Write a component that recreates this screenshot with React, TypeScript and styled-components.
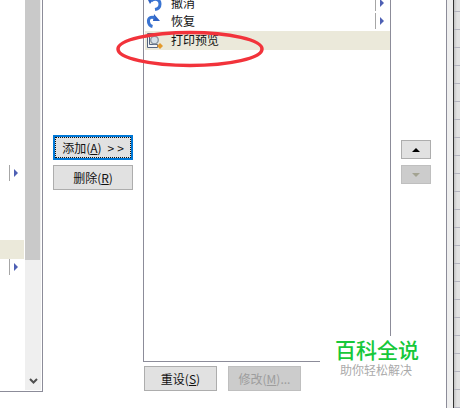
import React from 'react';
import styled, { createGlobalStyle } from 'styled-components';

const GlobalStyle = createGlobalStyle`
  html, body {
    margin: 0;
    padding: 0;
    background: #fff;
  }
  body {
    font-family: "Noto Sans CJK SC", "Liberation Sans", sans-serif;
    font-size: 12px;
    color: #111;
  }
`;

const Page = styled.div`
  position: relative;
  display: flex;
  width: 460px;
  height: 408px;
  overflow: hidden;
  background: #fff;
`;

const Dialog = styled.div`
  display: flex;
  flex: none;
  width: 446px;
  height: 408px;
`;

const LeftPane = styled.div`
  display: flex;
  flex: none;
  width: 43px;
  height: 392px;
  box-sizing: border-box;
  border-right: 1px solid #8c8c99;
  border-bottom: 1px solid #8c8c99;
`;

const LeftRows = styled.div`
  display: flex;
  flex-direction: column;
  flex: none;
  width: 25px;
  padding-top: 165px;
  box-sizing: border-box;
`;

const RowGap = styled.div<{ $h: number }>`
  flex: none;
  height: ${p => p.$h}px;
`;

const LeftHighlight = styled.div`
  flex: none;
  width: 24px;
  height: 19px;
  background: #ebe9da;
`;

const SubmenuMark = styled.div<{ $h: number }>`
  flex: none;
  display: flex;
  align-items: center;
  gap: 4px;
  height: ${p => p.$h}px;
  box-sizing: border-box;
  padding-left: 9px;

  &::before {
    content: '';
    width: 1px;
    height: 100%;
    background: #a6a6a6;
  }

  &::after {
    content: '';
    border-left: 4px solid #4e60b4;
    border-top: 4px solid transparent;
    border-bottom: 4px solid transparent;
  }
`;

const Scrollbar = styled.div`
  display: flex;
  flex-direction: column;
  flex: none;
  width: 16px;
  height: 390px;
  background: #efefef;
`;

const ScrollThumb = styled.div`
  flex: none;
  width: 15px;
  height: 260px;
  background: #c9c9c9;
`;

const ScrollArrow = styled.div`
  display: flex;
  justify-content: center;
  margin-top: auto;
  padding-bottom: 5px;
`;

const AddColumn = styled.div`
  display: flex;
  flex-direction: column;
  flex: none;
  gap: 5px;
  width: 100px;
  box-sizing: border-box;
  padding: 135px 0 0 10px;
`;

const Button = styled.div<{ $w: number; $h?: number; $disabled?: boolean; $default?: boolean }>`
  display: flex;
  align-items: center;
  justify-content: center;
  flex: none;
  width: ${p => p.$w}px;
  height: ${p => p.$h ?? 25}px;
  box-sizing: border-box;
  white-space: pre;
  background: ${p => (p.$disabled ? '#cccccc' : '#e1e1e1')};
  color: ${p => (p.$disabled ? '#9d9d9d' : '#111')};
  border: ${p => (p.$default ? '2px solid #0078d7' : '1px solid #adadad')};
  ${p => p.$disabled && 'border-color: #bfbfbf;'}
  ${p => p.$default && 'outline: 1px dotted #111; outline-offset: -3px;'}
`;

const Key = styled.span`
  text-decoration: underline;
  text-underline-offset: 1px;
`;

const Chevrons = styled.span`
  margin-left: 6px;
  letter-spacing: 3px;
  margin-right: -3px;
`;

const ListColumn = styled.div`
  display: flex;
  flex-direction: column;
  flex: none;
  width: 248px;
  height: 392px;
`;

const ListBox = styled.div`
  display: flex;
  flex-direction: column;
  flex: none;
  height: 362px;
  box-sizing: border-box;
  padding-left: 1px;
  border-left: 1px solid #8c8c99;
  border-right: 1px solid #8c8c99;
  border-bottom: 1px solid #8c8c99;
  overflow: hidden;
`;

const ListItem = styled.div<{ $active?: boolean; $cut?: boolean }>`
  display: flex;
  align-items: center;
  flex: none;
  height: ${p => (p.$active ? 19 : 18)}px;
  margin-top: ${p => (p.$cut ? -5 : 0)}px;
  background: ${p => (p.$active ? '#ebe9da' : 'transparent')};
  line-height: 18px;
`;

const ItemIcon = styled.svg`
  flex: none;
  width: 18px;
  height: 18px;
  margin-left: 1px;
  margin-right: 7px;
`;

const ItemLabel = styled.span`
  flex: 1;
  padding-bottom: 2px;
`;

const ItemMark = styled(SubmenuMark)`
  padding-left: 0;
  margin-right: 6px;
  margin-bottom: 2px;
`;

const ListActions = styled.div`
  display: flex;
  gap: 11px;
  padding: 4px 0 0 1px;
`;

const MoveColumn = styled.div`
  display: flex;
  flex-direction: column;
  flex: none;
  gap: 6px;
  width: 55px;
  box-sizing: border-box;
  padding: 140px 0 0 10px;
`;

const Triangle = styled.span<{ $down?: boolean }>`
  width: 0;
  height: 0;
  border-left: 4px solid transparent;
  border-right: 4px solid transparent;
  ${p =>
    p.$down
      ? 'border-top: 4px solid #a3a392;'
      : 'border-bottom: 4px solid #000;'}
`;

const Edge = styled.div`
  display: flex;
  flex: none;
  width: 13px;
  height: 408px;
  border-left: 1px solid #8c8c99;
`;

const EdgeStrip = styled.div`
  flex: none;
  width: 6px;
  background: #efefef;
  border-right: 1px solid #333;
`;

const RowHeaders = styled.div`
  flex: 1;
  background:
    repeating-linear-gradient(
      to bottom,
      transparent 0,
      transparent 11px,
      #b4b4bf 11px,
      #b4b4bf 12px,
      transparent 12px,
      transparent 18px
    ),
    linear-gradient(to right, #c4c4c4, #e2e2e2 50%);
`;

const Watermark = styled.div`
  position: absolute;
  left: 320px;
  top: 336px;
  width: 111px;
  height: 72px;
  padding-left: 15px;
  box-sizing: border-box;
  background: #fff;
`;

const WatermarkTitle = styled.div`
  font-size: 21px;
  line-height: 26px;
  font-weight: 500;
  color: #17c83a;
  white-space: nowrap;
`;

const WatermarkSub = styled.div`
  font-size: 12px;
  line-height: 16px;
  padding-left: 5px;
  color: #aaaaaa;
  white-space: nowrap;
`;

const Annotation = styled.svg`
  position: absolute;
  left: 114px;
  top: 28px;
  width: 152px;
  height: 42px;
`;

const UndoIcon = () => (
  <ItemIcon viewBox="0 0 18 18">
    <path d="M1 3h7L4 9z" fill="#2f62c4" />
    <path d="M5 6c4-3 9-2 9 3 0 3-2 5-5 5.500" fill="none" stroke="#3a74d2" strokeWidth="3" />
  </ItemIcon>
);

const RedoIcon = () => (
  <ItemIcon viewBox="0 0 18 18">
    <path d="M8 1l6 7H7z" fill="#2f62c4" />
    <path d="M9 5C5 3 2 5 2.500 9c.3 2.500 2 4 4 4.500" fill="none" stroke="#3a74d2" strokeWidth="3" />
  </ItemIcon>
);

const PreviewIcon = () => (
  <ItemIcon viewBox="0 0 18 18">
    <path d="M1.500 1.500h7v2h-5v9h8v3h-10z" fill="#f4f6f8" stroke="#55657f" />
    <circle cx="8.500" cy="8" r="3.800" fill="#d5e0e8" stroke="#8d98a3" strokeWidth="1.400" />
    <path d="M14 11l3 3-3 3-3-3z" fill="#e39a2d" />
  </ItemIcon>
);

export default function App() {
  return (
    <Page>
      <GlobalStyle />
      <Dialog>
        <LeftPane>
          <LeftRows>
            <SubmenuMark $h={16} />
            <RowGap $h={59} />
            <LeftHighlight />
            <SubmenuMark $h={16} />
          </LeftRows>
          <Scrollbar>
            <ScrollThumb />
            <ScrollArrow>
              <svg width="9" height="7" viewBox="0 0 9 7">
                <path d="M1 1l3.500 3.500L8 1" fill="none" stroke="#505050" strokeWidth="2" />
              </svg>
            </ScrollArrow>
          </Scrollbar>
        </LeftPane>
        <AddColumn>
          <Button $w={80} $default>
            添加(<Key>A</Key>)<Chevrons>{'>>'}</Chevrons>
          </Button>
          <Button $w={80}>
            删除(<Key>R</Key>)
          </Button>
        </AddColumn>
        <ListColumn>
          <ListBox>
            <ListItem $cut>
              <UndoIcon />
              <ItemLabel>撤消</ItemLabel>
              <ItemMark $h={16} />
            </ListItem>
            <ListItem>
              <RedoIcon />
              <ItemLabel>恢复</ItemLabel>
              <ItemMark $h={16} />
            </ListItem>
            <ListItem $active>
              <PreviewIcon />
              <ItemLabel>打印预览</ItemLabel>
            </ListItem>
          </ListBox>
          <ListActions>
            <Button $w={73}>
              重设(<Key>S</Key>)
            </Button>
            <Button $w={73} $disabled>
              修改(<Key>M</Key>)...
            </Button>
          </ListActions>
        </ListColumn>
        <MoveColumn>
          <Button $w={30} $h={19}>
            <Triangle />
          </Button>
          <Button $w={30} $h={19} $disabled>
            <Triangle $down />
          </Button>
        </MoveColumn>
      </Dialog>
      <Edge>
        <EdgeStrip />
        <RowHeaders />
      </Edge>
      <Watermark>
        <WatermarkTitle>百科全说</WatermarkTitle>
        <WatermarkSub>助你轻松解决</WatermarkSub>
      </Watermark>
      <Annotation viewBox="0 0 152 42">
        <ellipse cx="76" cy="21" rx="72" ry="16.500" fill="none" stroke="#f2333b" strokeWidth="3.500" />
      </Annotation>
    </Page>
  );
}
